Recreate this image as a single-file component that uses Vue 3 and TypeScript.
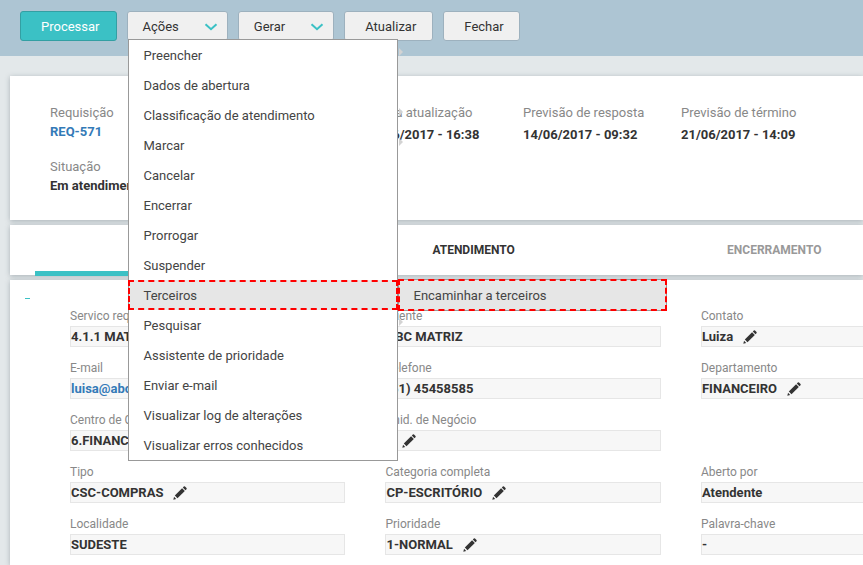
<script setup lang="ts">
import { ref } from 'vue'

interface MenuItem {
  label: string
  hasChildren?: boolean
  children?: string[]
}

interface Field {
  label: string
  value: string
  editable?: boolean
  href?: string
}

const menuItems: MenuItem[] = [
  { label: 'Preencher', hasChildren: true },
  { label: 'Dados de abertura' },
  { label: 'Classificação de atendimento', hasChildren: true },
  { label: 'Marcar', hasChildren: true },
  { label: 'Cancelar' },
  { label: 'Encerrar' },
  { label: 'Prorrogar' },
  { label: 'Suspender' },
  { label: 'Terceiros', children: ['Encaminhar a terceiros'] },
  { label: 'Pesquisar', hasChildren: true },
  { label: 'Assistente de prioridade' },
  { label: 'Enviar e-mail' },
  { label: 'Visualizar log de alterações' },
  { label: 'Visualizar erros conhecidos' },
]

const dates = [
  { label: 'Última atualização', value: '14/06/2017 - 16:38' },
  { label: 'Previsão de resposta', value: '14/06/2017 - 09:32' },
  { label: 'Previsão de término', value: '21/06/2017 - 14:09' },
]

const tabs = ['ABERTURA', 'ATENDIMENTO', 'ENCERRAMENTO']

const fields: (Field | null)[] = [
  { label: 'Servico requisitado', value: '4.1.1 MATERIAL' },
  { label: 'Cliente', value: 'ABC MATRIZ' },
  { label: 'Contato', value: 'Luiza', editable: true },
  { label: 'E-mail', value: 'luisa@abc.com', href: 'mailto:luisa@abc.com' },
  { label: 'Telefone', value: '(51) 45458585' },
  { label: 'Departamento', value: 'FINANCEIRO', editable: true },
  { label: 'Centro de Custo', value: '6.FINANCEIRO' },
  { label: 'Unid. de Negócio', value: '-', editable: true },
  null,
  { label: 'Tipo', value: 'CSC-COMPRAS', editable: true },
  { label: 'Categoria completa', value: 'CP-ESCRITÓRIO', editable: true },
  { label: 'Aberto por', value: 'Atendente' },
  { label: 'Localidade', value: 'SUDESTE' },
  { label: 'Prioridade', value: '1-NORMAL', editable: true },
  { label: 'Palavra-chave', value: '-' },
]

const menuOpen = ref(true)
const sectionOpen = ref(true)
</script>

<template>
  <div class="page">
    <header class="toolbar">
      <button type="button" class="btn primary">Processar</button>
      <div class="dropdown">
        <button type="button" class="btn split" aria-haspopup="menu" :aria-expanded="menuOpen" @click="menuOpen = !menuOpen">
          Ações
          <svg class="chevron" viewBox="0 0 14 8" aria-hidden="true"><path d="M1.5 1.2 7 6.2l5.500-5" /></svg>
        </button>
        <ul v-if="menuOpen" class="menu">
          <li v-for="item in menuItems" :key="item.label" :class="{ parent: item.hasChildren, active: item.children }">
            <button type="button" class="menu-item">{{ item.label }}</button>
            <ul v-if="item.children" class="submenu">
              <li v-for="child in item.children" :key="child">
                <button type="button" class="menu-item">{{ child }}</button>
              </li>
            </ul>
          </li>
        </ul>
      </div>
      <button type="button" class="btn split" aria-haspopup="menu">
        Gerar
        <svg class="chevron" viewBox="0 0 14 8" aria-hidden="true"><path d="M1.5 1.2 7 6.2l5.500-5" /></svg>
      </button>
      <button type="button" class="btn roomy">Atualizar</button>
      <button type="button" class="btn">Fechar</button>
    </header>

    <main class="content">
      <section class="card summary">
        <dl class="ident">
          <div>
            <dt>Requisição</dt>
            <dd><a href="#req-571">REQ-571</a></dd>
          </div>
          <div>
            <dt>Situação</dt>
            <dd>Em atendimento</dd>
          </div>
        </dl>
        <dl v-for="date in dates" :key="date.label" class="date">
          <dt>{{ date.label }}</dt>
          <dd>{{ date.value }}</dd>
        </dl>
      </section>

      <nav class="card tabs">
        <button v-for="(tab, i) in tabs" :key="tab" type="button" class="tab" :class="{ underlined: i === 0, current: i === 1 }">
          {{ tab }}
        </button>
      </nav>

      <section class="card details">
        <button type="button" class="collapse" aria-label="Recolher" @click="sectionOpen = !sectionOpen"></button>
        <dl v-if="sectionOpen" class="fields">
          <div v-for="(field, i) in fields" :key="i" class="field">
            <template v-if="field">
              <dt>{{ field.label }}</dt>
              <dd>
                <a v-if="field.href" :href="field.href">{{ field.value }}</a>
                <span v-else>{{ field.value }}</span>
                <button v-if="field.editable" type="button" class="edit" :aria-label="'Editar ' + field.label">
                  <svg viewBox="0 0 14 14" aria-hidden="true">
                    <path d="M.3 13.700 1.100 10.800 3.200 12.900Z" />
                    <path d="M1.800 9.500 9.100 2.200 11.800 4.900 4.500 12.200Z" />
                    <path d="M9.800 1.500 10.800.500Q11.400 0 12 .500L13.500 2Q14 2.600 13.500 3.200L12.500 4.200Z" />
                  </svg>
                </button>
              </dd>
            </template>
          </div>
        </dl>
      </section>
    </main>
  </div>
</template>

<style>
body {
  margin: 0;
  background: #e3e8ea;
}
</style>

<style scoped>
.page {
  min-height: 100vh;
  overflow: hidden;
  display: flex;
  flex-direction: column;
  font-family: Roboto, 'Liberation Sans', sans-serif;
  font-size: 13px;
  color: #333;
}

button {
  font: inherit;
  color: inherit;
  cursor: pointer;
}

dl,
dt,
dd,
ul {
  margin: 0;
  padding: 0;
  list-style: none;
}

a {
  color: #337ab7;
  text-decoration: none;
}

.toolbar {
  display: flex;
  gap: 10px;
  padding: 11px 20px 15px;
  background: #adc5d3;
}

.btn {
  display: flex;
  align-items: center;
  justify-content: space-between;
  height: 30px;
  box-sizing: border-box;
  padding: 0 15px 0 20px;
  border: 1px solid #9db1be;
  border-radius: 3px;
  background: #f0f0f0;
  white-space: nowrap;
}

.btn.primary {
  padding-right: 16px;
  border-color: #339fa3;
  background: #3bc1c5;
  color: #fff;
}

.btn.roomy {
  padding-right: 16px;
}

.btn.split {
  gap: 25px;
  padding: 0 9px 0 15px;
}

.chevron {
  width: 14px;
  height: 8px;
  margin-top: 2px;
  fill: none;
  stroke: #3bc1c5;
  stroke-width: 2;
}

.dropdown {
  position: relative;
}

.menu {
  position: absolute;
  top: 28px;
  left: 1px;
  z-index: 2;
  width: 268px;
  border: 1px solid #999;
  background: #fff;
}

.menu li {
  position: relative;
}

.menu-item {
  display: block;
  width: 100%;
  height: 30px;
  padding: 0 15px;
  border: 0;
  background: none;
  text-align: left;
  color: #444;
}

.parent::after {
  content: '';
  position: absolute;
  top: 8px;
  right: -6px;
  border: 4px solid transparent;
  border-right-width: 0;
  border-left-color: #d3d3d3;
}

.active > .menu-item,
.submenu .menu-item {
  background: #e6e6e6;
}

.active::after {
  content: '';
  position: absolute;
  inset: 0 -1px;
  border: 2px dashed #f00;
  pointer-events: none;
}

.submenu {
  position: absolute;
  top: -1px;
  left: calc(100% + 1px);
  width: 267px;
  border: 1px solid #999;
}

.submenu::after {
  content: '';
  position: absolute;
  inset: -1px;
  border: 2px dashed #f00;
  pointer-events: none;
}

.content {
  flex: 1;
  display: flex;
  flex-direction: column;
  gap: 5px;
  padding: 20px 0 0 10px;
}

.card {
  background: #fff;
  box-shadow: 0 1px 5px rgba(60, 75, 85, 0.35);
}

.summary {
  display: grid;
  grid-template-columns: 315px repeat(2, 158px) 1fr;
  padding: 27px 0 25px 40px;
}

.summary dt {
  line-height: 20px;
  color: #888;
}

.summary dd {
  font-weight: 700;
  line-height: 18px;
}

.ident {
  display: grid;
  gap: 16px;
}

.date dd {
  line-height: 24px;
}

.tabs {
  display: grid;
  grid-template-columns: repeat(3, 33.3%);
  gap: 25px;
  height: 50px;
  padding-left: 25px;
}

.tab {
  padding: 0;
  border: 0;
  background: none;
  font-size: 12px;
  font-weight: 700;
  color: #999;
}

.tab.current {
  color: #333;
}

.tab.underlined {
  box-shadow: inset 0 -4px #3bc1c5, 0 1px #3bc1c5;
}

.details {
  flex: 1;
  display: grid;
  grid-template-columns: 45px 1fr;
  padding: 10px 0 0 15px;
}

.collapse {
  width: 5px;
  height: 18px;
  padding: 0;
  border: 0;
  background: linear-gradient(#3bc1c5, #3bc1c5) 0 8px / 5px 1px no-repeat;
}

.fields {
  display: grid;
  grid-template-columns: 34fr 34fr 20fr;
  align-content: start;
  gap: 11px 40px;
  padding-top: 16px;
}

.fields dt {
  font-size: 12px;
  line-height: 20px;
  color: #888;
}

.fields dd {
  display: flex;
  align-items: center;
  gap: 10px;
  height: 21px;
  box-sizing: border-box;
  border: 1px solid #e6e6e6;
  background: #f7f7f7;
  font-weight: 700;
}

.field:nth-child(3n) dd {
  border-right: 0;
}

.edit {
  display: flex;
  padding: 0;
  border: 0;
  background: none;
}

.edit svg {
  width: 14px;
  height: 14px;
  fill: #333;
}
</style>
